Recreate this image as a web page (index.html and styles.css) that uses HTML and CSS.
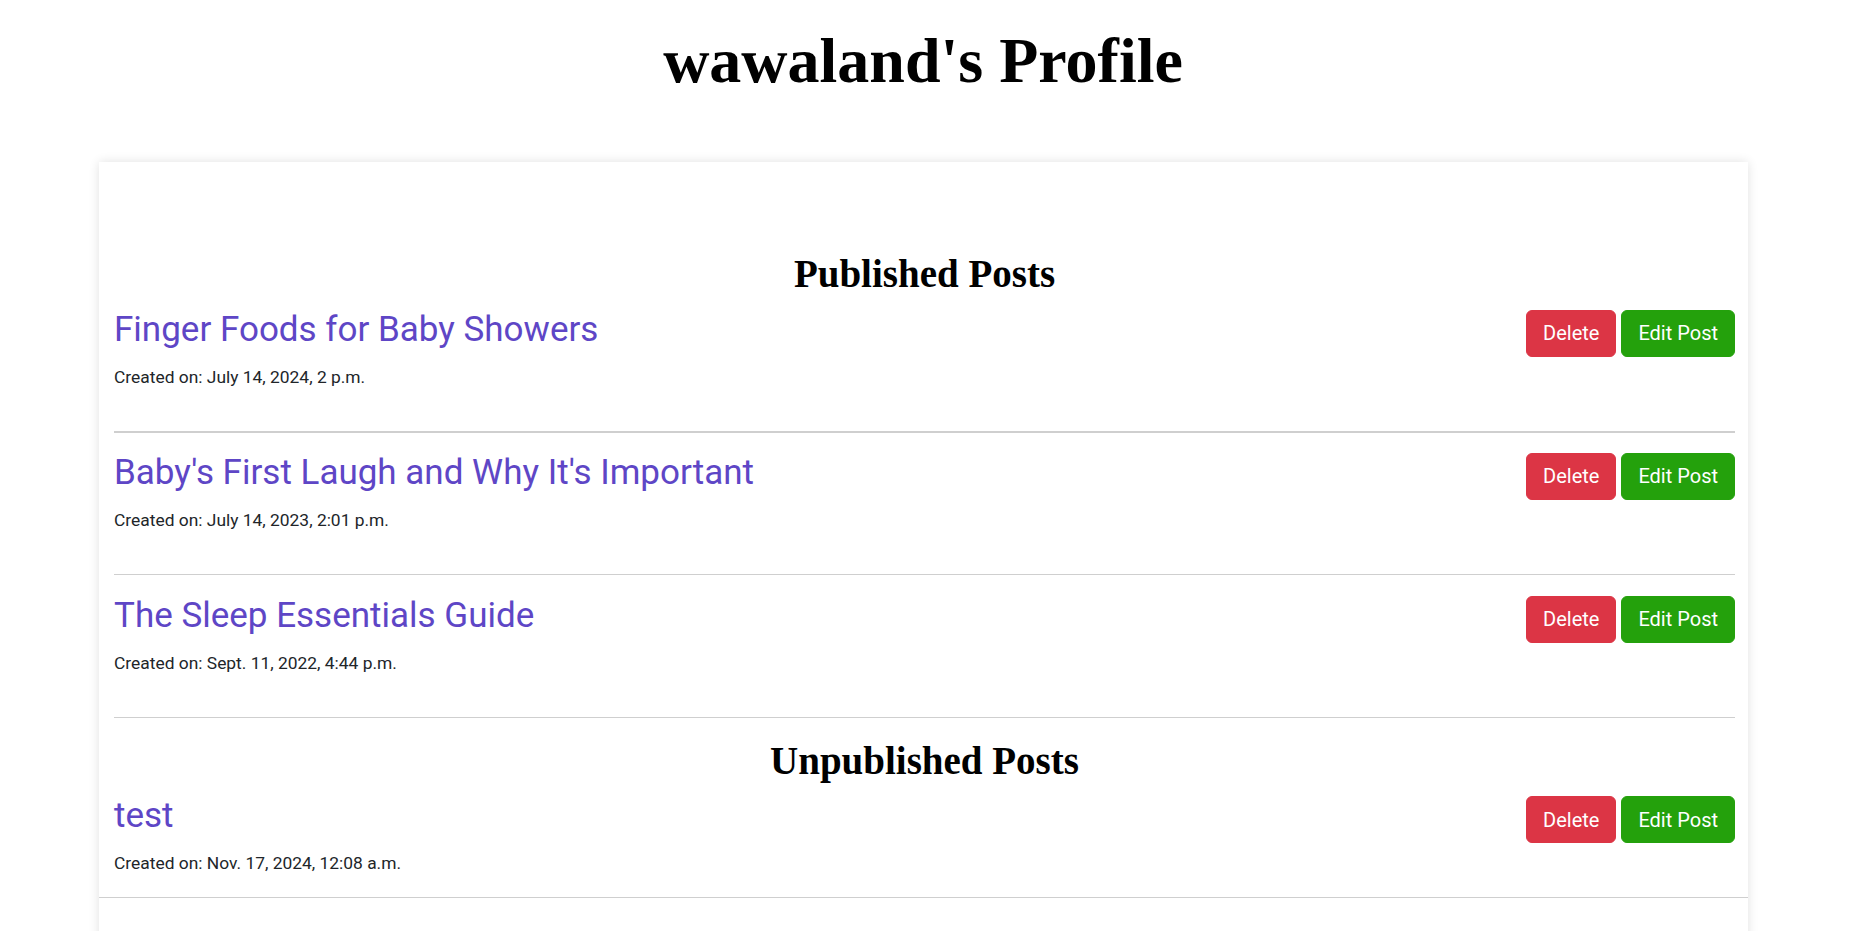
FILE: index.html
```html
<!DOCTYPE html>
<html lang="en">
<head>
<meta charset="utf-8">
<title>wawaland's Profile</title>
<link rel="stylesheet" href="styles.css">
</head>
<body>
<div class="page">
  <h1 class="page-title">wawaland's Profile</h1>
  <div class="card">
    <div class="card-body">
      <h3 class="section-title">Published Posts</h3>

      <div class="post post--first">
        <div class="post-info">
          <h2 class="post-title"><a href="#">Finger Foods for Baby Showers</a></h2>
          <p class="post-date">Created on: July 14, 2024, 2 p.m.</p>
        </div>
        <div class="post-actions">
          <a class="btn btn-danger" href="#">Delete</a>
          <a class="btn btn-success" href="#">Edit Post</a>
        </div>
      </div>

      <div class="post">
        <div class="post-info">
          <h2 class="post-title"><a href="#">Baby's First Laugh and Why It's Important</a></h2>
          <p class="post-date">Created on: July 14, 2023, 2:01 p.m.</p>
        </div>
        <div class="post-actions">
          <a class="btn btn-danger" href="#">Delete</a>
          <a class="btn btn-success" href="#">Edit Post</a>
        </div>
      </div>

      <div class="post">
        <div class="post-info">
          <h2 class="post-title"><a href="#">The Sleep Essentials Guide</a></h2>
          <p class="post-date">Created on: Sept. 11, 2022, 4:44 p.m.</p>
        </div>
        <div class="post-actions">
          <a class="btn btn-danger" href="#">Delete</a>
          <a class="btn btn-success" href="#">Edit Post</a>
        </div>
      </div>

      <h3 class="section-title">Unpublished Posts</h3>

      <div class="post post--last">
        <div class="post-info">
          <h2 class="post-title"><a href="#">test</a></h2>
          <p class="post-date">Created on: Nov. 17, 2024, 12:08 a.m.</p>
        </div>
        <div class="post-actions">
          <a class="btn btn-danger" href="#">Delete</a>
          <a class="btn btn-success" href="#">Edit Post</a>
        </div>
      </div>
    </div>
    <div class="card-footer"></div>
  </div>
</div>
</body>
</html>
```

FILE: styles.css
```css
html, body {
  margin: 0;
  padding: 0;
  background: #ffffff;
}

body {
  font-family: Roboto, "Liberation Sans", Arial, sans-serif;
  color: #212529;
}

.page {
  width: 1846px;
  padding-bottom: 40px;
}

.page-title {
  margin: 23px 0 62px;
  text-align: center;
  font-family: "Liberation Serif", "Times New Roman", serif;
  font-weight: 700;
  font-size: 64px;
  line-height: 1.2;
  color: #000;
}

.card {
  margin: 0 98px 0 99px;
  background: #fff;
  box-shadow: 0 0 10px rgba(0, 0, 0, 0.12);
}

.card-body {
  padding: 89px 13px 0 15px;
}

.section-title {
  margin: 0 0 11px;
  text-align: center;
  font-family: "Liberation Serif", "Times New Roman", serif;
  font-weight: 700;
  font-size: 39px;
  line-height: 1.2;
  color: #000;
}

.post {
  display: flex;
  justify-content: space-between;
  align-items: flex-start;
  padding-bottom: 41px;
  margin-bottom: 20px;
  border-bottom: 1px solid #cfcfcf;
}

.post--first {
  border-bottom-width: 2px;
  margin-bottom: 19px;
}

.post--last {
  padding-bottom: 21px;
  margin-bottom: 0;
  border-bottom: none;
}

.post-title {
  margin: 0 0 13px;
  font-size: 35px;
  line-height: 42px;
  font-weight: 400;
}

.post-title a {
  color: #5e46c6;
  text-decoration: none;
}

.post-date {
  margin: 0;
  font-size: 17.4px;
  line-height: 26px;
  color: #212529;
}

.post-actions {
  display: flex;
  gap: 5px;
  margin-top: 1px;
}

.btn {
  display: inline-block;
  padding: 7.5px 16px;
  border: 1px solid transparent;
  border-radius: 6px;
  font-size: 20px;
  line-height: 30px;
  color: #fff;
  text-decoration: none;
}

.btn-danger {
  background: #dc3545;
  border-color: #dc3545;
}

.btn-success {
  background: #24a10c;
  border-color: #24a10c;
}

.card-footer {
  height: 80px;
  border-top: 1px solid #cfcfcf;
}
```
